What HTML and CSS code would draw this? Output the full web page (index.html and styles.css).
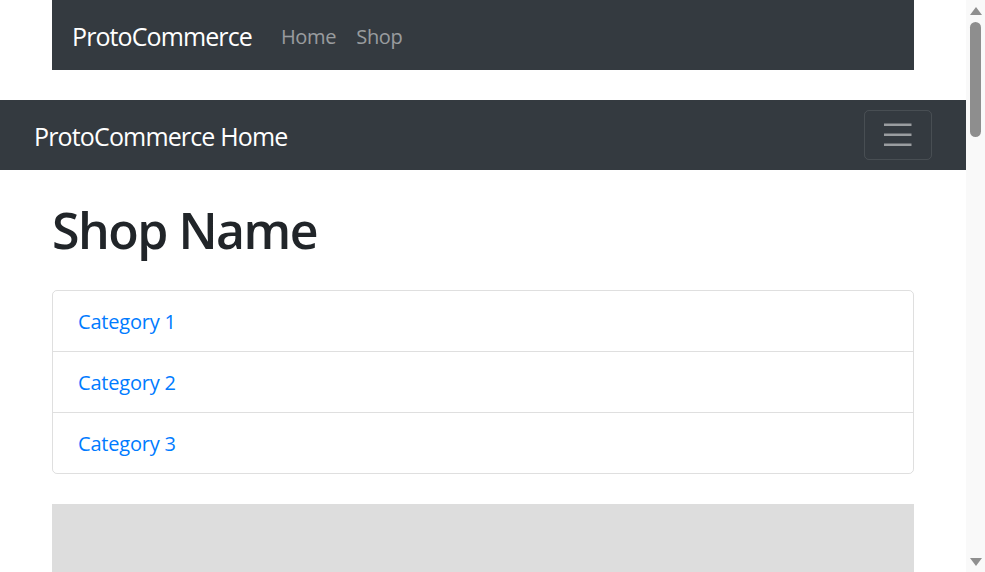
FILE: index.html
```html
<!DOCTYPE html>
<html lang="en">
<head>
<meta charset="utf-8">
<title>ProtoCommerce</title>
<link rel="stylesheet" href="styles.css">
</head>
<body>
  <div class="page">
    <nav class="topbar">
      <a class="brand" href="#">ProtoCommerce</a>
      <ul class="topnav">
        <li><a class="toplink" href="#">Home</a></li>
        <li><a class="toplink" href="#">Shop</a></li>
      </ul>
    </nav>

    <nav class="mainbar">
      <a class="brand brand-wide" href="#">ProtoCommerce Home</a>
      <button class="toggler" type="button" aria-label="Toggle navigation">
        <svg class="toggler-icon" viewBox="0 0 30 30" width="37.5" height="37.5">
          <path stroke="rgba(255,255,255,0.5)" stroke-linecap="butt" stroke-miterlimit="10" stroke-width="2" d="M4 7h22M4 15h22M4 23h22"/>
        </svg>
      </button>
    </nav>

    <main class="content">
      <h1 class="title">Shop Name</h1>
      <div class="list-group">
        <a class="list-item" href="#">Category 1</a>
        <a class="list-item" href="#">Category 2</a>
        <a class="list-item" href="#">Category 3</a>
      </div>
      <div class="placeholder"></div>
    </main>
  </div>

  <div class="scrollbar" aria-hidden="true">
    <span class="arrow arrow-up"></span>
    <span class="thumb"></span>
    <span class="track-rest"></span>
    <span class="arrow arrow-down"></span>
  </div>
</body>
</html>
```

FILE: styles.css
```css
* { box-sizing: border-box; }

html, body {
  margin: 0;
  padding: 0;
  height: 100%;
  overflow: hidden;
}

body {
  font-family: "Open Sans", "Noto Sans", sans-serif;
  font-size: 20px;
  line-height: 1.5;
  color: #212529;
  background: #fff;
  display: flex;
}

a { text-decoration: none; }

.page {
  width: 966px;
  flex: none;
  height: 100%;
  overflow: hidden;
}

/* fake classic scrollbar */
.scrollbar {
  width: 19px;
  flex: none;
  height: 100%;
  background: #f9f9f9;
  display: flex;
  flex-direction: column;
  align-items: center;
  padding: 7px 0 6px;
}

.arrow {
  width: 0;
  height: 0;
  border-left: 6px solid transparent;
  border-right: 6px solid transparent;
}

.arrow-up { border-bottom: 8px solid #8f8f8f; }
.arrow-down { border-top: 8px solid #8f8f8f; }

.thumb {
  margin-top: 7px;
  width: 11px;
  height: 115px;
  border-radius: 6px;
  background: #8e8e8e;
}

.track-rest { flex: 1; }

/* navbars */
.topbar {
  width: 862px;
  margin: 0 52px;
  height: 70px;
  background: #343a40;
  display: flex;
  align-items: center;
  padding: 10px 20px;
}

.brand {
  font-size: 25px;
  line-height: 37.5px;
  padding-top: 4px;
  color: #fff;
  margin-right: 19px;
  white-space: nowrap;
  letter-spacing: -0.9px;
}

.brand-wide { letter-spacing: -0.85px; }

.topnav {
  list-style: none;
  margin: 0;
  padding: 0;
  display: flex;
}

.toplink {
  display: block;
  padding: 14px 10px 10px;
  color: rgba(255, 255, 255, 0.5);
  line-height: 30px;
  letter-spacing: -0.3px;
}

.mainbar {
  margin-top: 30px;
  height: 70px;
  background: #343a40;
  display: flex;
  align-items: center;
  justify-content: space-between;
  padding: 10px 34px;
}

.toggler {
  width: 68px;
  height: 50px;
  padding: 0;
  background: transparent;
  border: 1.25px solid rgba(255, 255, 255, 0.1);
  border-radius: 5px;
  display: flex;
  align-items: center;
  justify-content: center;
}

.toggler-icon { display: block; }

/* content */
.content {
  width: 862px;
  margin: 0 52px;
  padding-top: 30px;
}

.title {
  margin: 0 0 30px;
  font-size: 50px;
  font-weight: 600;
  line-height: 60px;
  letter-spacing: -1.5px;
}

.list-group {
  display: flex;
  flex-direction: column;
  border: 1px solid rgba(0, 0, 0, 0.125);
  border-radius: 5px;
}

.list-item {
  display: block;
  padding: 16px 25px 14px;
  line-height: 30px;
  color: #007bff;
  letter-spacing: -0.2px;
}

.list-item + .list-item {
  border-top: 1px solid rgba(0, 0, 0, 0.125);
}

.placeholder {
  margin-top: 30px;
  height: 2100px;
  background: #dddddd;
}
```
